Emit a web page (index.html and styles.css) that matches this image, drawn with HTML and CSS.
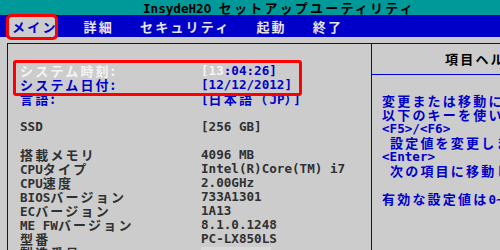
FILE: index.html
```html
<!DOCTYPE html>
<html lang="ja">
<head>
<meta charset="utf-8">
<link rel="stylesheet" href="styles.css">
</head>
<body>
<header class="title">InsydeH2O <span class="j">セットアップユーティリティ</span></header>
<nav class="menu">
  <span class="item active j">メイン</span>
  <span class="item j">詳細</span>
  <span class="item j">セキュリティ</span>
  <span class="item j">起動</span>
  <span class="item j">終了</span>
</nav>
<main class="main">
  <section class="left">
    <div class="row sel"><span class="lab j">システム時刻:</span><span class="val"><span class="hl">[13</span>:04:26]</span></div>
    <div class="row blue"><span class="lab j">システム日付:</span><span class="val">[12/12/2012]</span></div>
    <div class="row blue"><span class="lab j">言語:</span><span class="val">[<span class="j">日本語（</span>JP<span class="j">）</span>]</span></div>
    <div class="row empty"></div>
    <div class="row"><span class="lab">SSD</span><span class="val">[256 GB]</span></div>
    <div class="row empty"></div>
    <div class="row"><span class="lab j">搭載メモリ</span><span class="val">4096 MB</span></div>
    <div class="row"><span class="lab">CPU<span class="j">タイプ</span></span><span class="val">Intel(R)Core(TM) i7</span></div>
    <div class="row"><span class="lab">CPU<span class="j">速度</span></span><span class="val">2.00GHz</span></div>
    <div class="row"><span class="lab">BIOS<span class="j">バージョン</span></span><span class="val">733A1301</span></div>
    <div class="row"><span class="lab">EC<span class="j">バージョン</span></span><span class="val">1A13</span></div>
    <div class="row"><span class="lab">ME FW<span class="j">バージョン</span></span><span class="val">8.1.0.1248</span></div>
    <div class="row"><span class="lab j">型番</span><span class="val">PC-LX850LS</span></div>
    <div class="row"><span class="lab j">製造番号</span><span class="val"><span class="mask"></span></span></div>
  </section>
  <aside class="right">
    <div class="help-head j">項目ヘルプ</div>
    <div class="help-body"><div class="j">変更または移動には、</div><div class="j">以下のキーを使います:</div><div>&lt;F5&gt;/&lt;F6&gt;</div><div class="ind j">設定値を変更します</div><div>&lt;Enter&gt;</div><div class="ind j">次の項目に移動します</div><div class="empty"></div><div><span class="j">有効な設定値は</span>0~23</div></div>
  </aside>
  <div class="mark"></div>
</main>
</body>
</html>
```

FILE: styles.css
```css
* { box-sizing: border-box; }
html, body {
  margin: 0;
  padding: 0;
}
body {
  width: 500px;
  height: 250px;
  overflow: hidden;
  background: #cccccc;
  font-family: "DejaVu Sans Mono", "Liberation Mono", monospace;
  font-weight: bold;
  font-size: 12.6px;
  line-height: 14px;
  color: #303030;
}
.j {
  font-family: "Noto Sans CJK JP", "Noto Sans CJK SC", sans-serif;
  font-size: 13px;
  letter-spacing: 2.2px;
  font-weight: bold;
}
.title {
  height: 15px;
  line-height: 15px;
  background: #009999;
  color: #000000;
  padding-left: 143px;
  white-space: nowrap;
}
.menu {
  height: 22px;
  background: #0000c8;
  display: flex;
  align-items: flex-end;
  gap: 23px;
  padding-left: 9px;
  color: #e4e4e4;
}
.item {
  padding-left: 3px;
  line-height: 20px;
  height: 20px;
  white-space: nowrap;
}
.item.active {
  flex: 0 0 46px;
  width: 46px;
  margin-right: 2.6px;
  background: #cccccc;
  color: #0000c8;
  outline: 3px solid #ff0000;
  border-radius: 2px;
}
.main {
  position: relative;
  margin: 6px 0 0 7px;
  height: 207px;
  border-top: 1px solid #0000c8;
  border-left: 1px solid #0000c8;
  display: grid;
  grid-template-columns: 363px 1fr;
}
.left {
  padding: 20px 0 0 12px;
}
.row {
  display: grid;
  grid-template-columns: 181px auto;
  height: 14px;
  white-space: nowrap;
}
.row.sel .lab { color: #f4f4f4; }
.row.sel .val { color: #0000c8; }
.hl { color: #f4f4f4; }
.row.blue { color: #0000c8; }
.mask {
  display: inline-block;
  width: 70px;
  height: 14px;
  vertical-align: top;
  margin-top: 1px;
  background: #d8d8d8;
}
.right {
  border-left: 1px solid #0000c8;
  overflow: hidden;
  white-space: nowrap;
}
.help-head {
  height: 31px;
  padding: 8px 0 0 73px;
  border-bottom: 1px solid #0000c8;
  color: #000000;
}
.help-body {
  padding: 19px 0 0 10px;
  color: #0000c8;
}
.help-body > div { height: 14px; }
.ind { padding-left: 8px; }
.empty { height: 14px; }
.mark {
  position: absolute;
  left: 5px;
  top: 16px;
  width: 289px;
  height: 36px;
  border: 3px solid #ff0000;
  border-radius: 3px;
  pointer-events: none;
}
```
